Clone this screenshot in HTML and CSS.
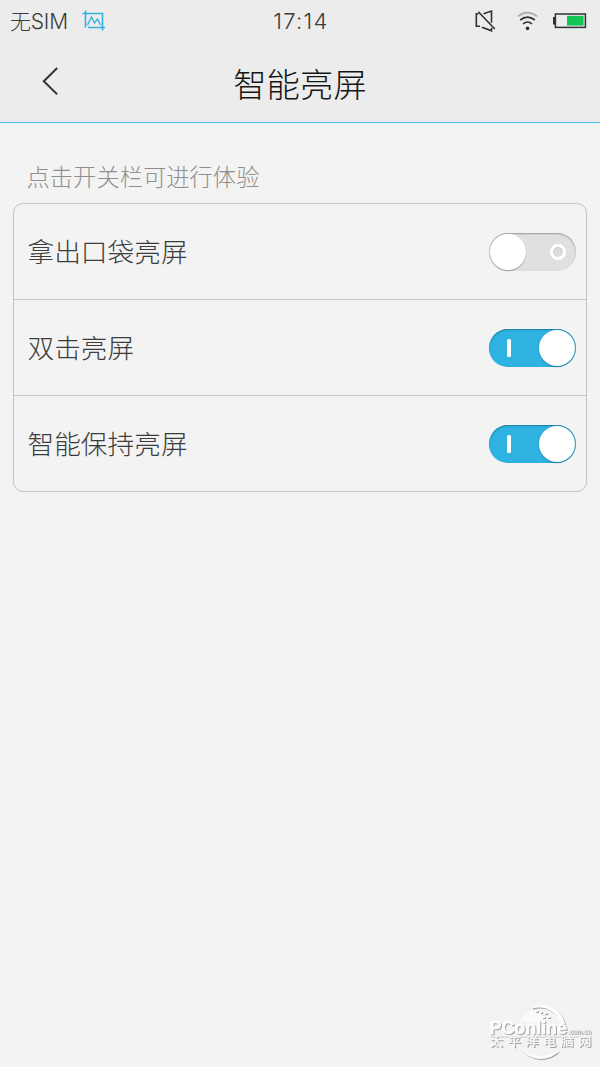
FILE: index.html
```html
<!DOCTYPE html>
<html lang="zh-CN">
<head>
<meta charset="utf-8">
<title>智能亮屏</title>
<link rel="stylesheet" href="styles.css">
</head>
<body>
<div class="screen">
  <div class="status">
    <div class="status-left">
      <span class="carrier">无SIM</span>
      <svg class="shot-icon" width="24" height="22" viewBox="0 0 24 22" fill="none" stroke="#35afdf" stroke-width="1.6">
        <path d="M3.5 0.5V17.5M6 17.5H23M0.5 3.5H20.5V20.5"/>
        <path d="M5.5 15L9.5 7L12.5 13L15.5 9L18.5 15" stroke-width="1.4"/>
      </svg>
    </div>
    <span class="clock">17:14</span>
    <div class="status-right">
      <svg width="22" height="24" viewBox="0 0 22 24" fill="none" stroke="#303030" stroke-width="1.6">
        <path d="M3.5 4.8H1.3V17.3H5M8.5 4.7L16.5 2V13.8M7 18.3L16.5 21.8V18.8"/>
        <path d="M3.3 2.8L19.8 20"/>
      </svg>
      <svg class="wifi" width="22" height="20" viewBox="0 0 22 20" fill="none" stroke="#303030" stroke-width="1.6">
        <path d="M0.8 5.4Q10.5-2.2 20.2 5.4" stroke="#adadad"/>
        <path d="M3.2 9Q10.5 3.2 17.8 9M6 13Q10.5 9 15 13"/>
        <circle cx="10.5" cy="17.4" r="1.8" fill="#303030" stroke="none"/>
      </svg>
      <svg class="battery" width="34" height="16" viewBox="0 0 34 16">
        <path d="M3 4H0V11.5H3" fill="#303030"/>
        <rect x="2.4" y="1" width="30" height="13.4" fill="none" stroke="#303030" stroke-width="1.5"/>
        <rect x="14" y="2.8" width="16.6" height="9.8" fill="#13c456"/>
      </svg>
    </div>
  </div>
  <div class="header">
    <svg class="back" width="18" height="30" viewBox="0 0 18 30" fill="none" stroke="#333" stroke-width="2">
      <path d="M15.2 2L1.8 15.2L15.2 28.4"/>
    </svg>
    <h1 class="title">智能亮屏</h1>
  </div>
  <p class="hint">点击开关栏可进行体验</p>
  <div class="card">
    <div class="row"><span class="label">拿出口袋亮屏</span><span class="toggle off"><i class="knob"></i><i class="ring"></i></span></div>
    <div class="row"><span class="label">双击亮屏</span><span class="toggle on"><i class="bar"></i><i class="knob"></i></span></div>
    <div class="row"><span class="label">智能保持亮屏</span><span class="toggle on"><i class="bar"></i><i class="knob"></i></span></div>
  </div>
  <svg class="watermark" width="108" height="60" viewBox="0 0 108 60">
    <path class="land" d="M31 19Q36 9 46 5L50 9H54V12L62 13L63 17H52V19Z"/>
    <path class="mark" d="M45 4C62-2 76 9 78 21H74C70 9 59 2 45 5.5Z"/>
    <path class="mark" d="M33 45A25 25 0 0 0 73 47Q52 60 33 45Z"/>
    <path class="mark" d="M48 7h3v2h-3zM53 8h2v2h-2zM57 9h3v2h-3zM55 13h3v2h-3zM60 13h3v2h-3z"/>
    <g class="mark">
      <text class="brand" x="2.5" y="30.5" textLength="77.5" lengthAdjust="spacingAndGlyphs">PConline</text>
      <text class="domain" x="81" y="30.5" textLength="23" lengthAdjust="spacingAndGlyphs">.com.cn</text>
      <path class="rule" d="M3 33H104"/>
      <text class="brand-cn" transform="translate(3 43.3) scale(1.2 1)" textLength="84.5">太平洋电脑网</text>
    </g>
  </svg>
</div>
</body>
</html>
```
FILE: styles.css
```css
* { box-sizing: border-box; }
body { margin: 0; background: #f3f3f3; }
.screen {
  position: relative;
  width: 600px;
  height: 1067px;
  overflow: hidden;
  background: #f3f3f3;
  font-family: "Noto Sans CJK SC", sans-serif;
  font-weight: 300;
}
.status {
  display: grid;
  grid-template-columns: 1fr auto 1fr;
  align-items: center;
  height: 42px;
  padding: 0 13px 0 10px;
  background: #ececec;
  color: #3b3b3b;
  font-size: 21px;
}
.status-left { display: flex; align-items: center; gap: 14px; }
.carrier {
  width: 58px;
  padding-top: 1px;
  font-family: Inter, "Noto Sans CJK SC", sans-serif;
  font-size: 21px;
  line-height: 30px;
  letter-spacing: -0.2px;
  white-space: nowrap;
}
.clock {
  padding-left: 5px;
  font-family: Inter, sans-serif;
  font-size: 22px;
  letter-spacing: 1.3px;
}
.status-right { display: flex; align-items: center; justify-content: flex-end; gap: 14px; }
.wifi { margin-left: 6px; }
.header {
  display: grid;
  grid-template-columns: 42px 1fr 42px;
  align-items: center;
  height: 81px;
  background: #ececec;
  border-bottom: 1px solid #55bfee;
  box-shadow: 0 1px #e3f2f9;
}
.back { justify-self: end; margin-right: -18px; margin-bottom: 3px; }
.title {
  margin: 0;
  padding-top: 1px;
  text-align: center;
  color: #151515;
  font-size: 33.4px;
  font-weight: 300;
  line-height: 79px;
}
.hint {
  margin: 35px 0 0 26.5px;
  color: #8f8f8f;
  font-size: 23.3px;
  line-height: 36px;
}
.card {
  width: 574px;
  margin: 9px 0 0 13px;
  border: 1px solid #c4c4c4;
  border-radius: 10px;
}
.row {
  display: flex;
  align-items: center;
  justify-content: space-between;
  height: 96px;
  padding: 0 10px 0 13.5px;
  border-bottom: 1px solid #c4c4c4;
}
.row:last-child { height: 95px; border-bottom: 0; }
.label { margin-bottom: 2px; color: #3c3c3c; font-size: 26.7px; line-height: 40px; }
.toggle {
  display: flex;
  align-items: center;
  justify-content: space-between;
  width: 87px;
  height: 38px;
  padding: 0 1px;
  border-radius: 19px;
}
.off { background: #e0e0e0; box-shadow: inset 0 1px 1.5px #999; }
.on { background: #2db2e1; box-shadow: inset 0 1px 1.5px #207b9c; }
.knob { width: 36px; height: 36px; border-radius: 50%; background: #fff; }
.off .knob { box-shadow: 0 1px 1px #999; }
.on .knob { box-shadow: 0 1px 1px #207b9c; }
.ring {
  width: 16px;
  height: 16px;
  margin-right: 9px;
  border: 3px solid #fff;
  border-radius: 50%;
  background: #dcdcdc;
  box-shadow: inset 0 1px 1px #c4c4c4;
}
.bar { width: 4px; height: 18px; margin-left: 17px; border-radius: 1.5px; background: #fff; }
.watermark { position: absolute; left: 487px; top: 1003px; fill: #fdfdfd; }
.land { fill: #fafafa; filter: drop-shadow(0 0 0.5px #bbb); }
.mark { filter: drop-shadow(1px 1px 0.4px #a2a2a2); }
.brand { font-family: "Liberation Sans", sans-serif; font-size: 18px; font-weight: 700; stroke: #fdfdfd; stroke-width: 0.4; }
.domain { fill: #dedede; font-family: "Liberation Sans", sans-serif; font-size: 7px; font-weight: 700; }
.brand-cn { fill: #f6f6f6; font-family: "Noto Sans CJK SC", sans-serif; font-size: 11px; font-weight: 700; }
.rule { stroke: #fafafa; stroke-width: 0.6; }
```
